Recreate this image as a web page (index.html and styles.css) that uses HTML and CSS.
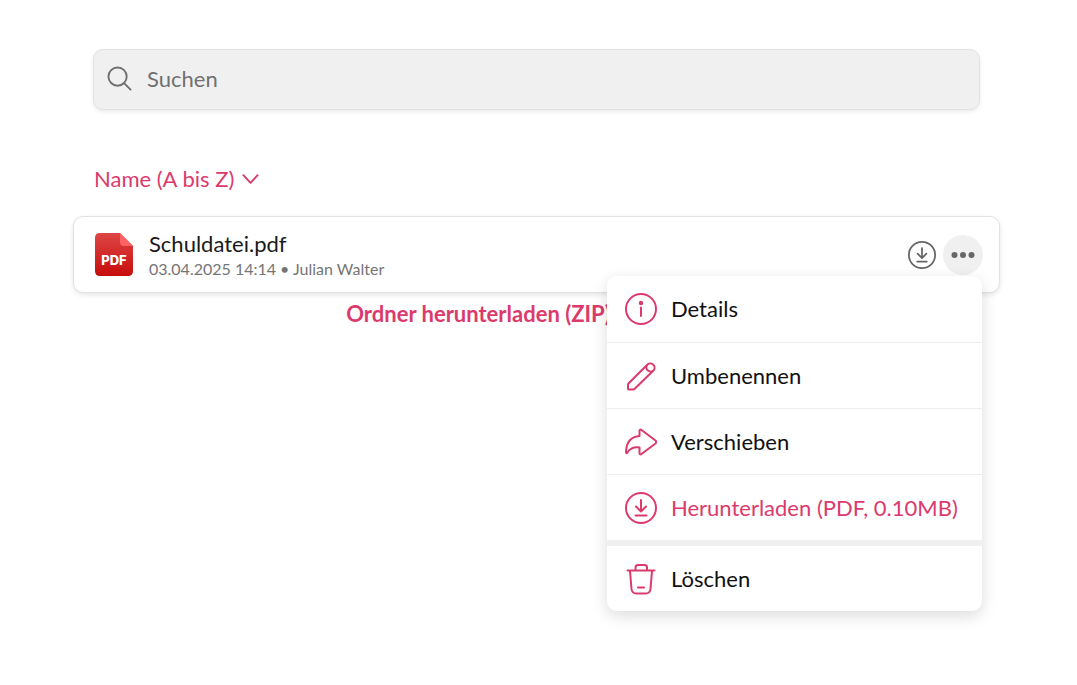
FILE: index.html
```html
<!DOCTYPE html>
<html lang="de">
<head>
<meta charset="utf-8">
<meta name="viewport" content="width=device-width, initial-scale=1">
<title>Dateien</title>
<link rel="stylesheet" href="styles.css">
</head>
<body>
<main class="page">
  <label class="search">
    <svg class="search-icon" viewBox="0 0 26 26" aria-hidden="true"><circle cx="11" cy="11" r="9.5"/><path d="M18 18l6.500 6.500"/></svg>
    <input class="search-input" type="search" placeholder="Suchen" aria-label="Suchen">
  </label>

  <button class="sort" type="button">Name (A bis Z)
    <svg class="sort-icon" viewBox="0 0 18 12" aria-hidden="true"><path d="M1.500 2l7.500 8 7.500-8"/></svg>
  </button>

  <article class="file">
    <svg class="file-icon" viewBox="0 0 38 44" role="img" aria-label="PDF-Datei">
      <defs><linearGradient id="pdf" x1="0" y1="0" x2="0" y2="1"><stop offset="0" stop-color="#de4545"/><stop offset="1" stop-color="#c70d0d"/></linearGradient></defs>
      <path fill="url(#pdf)" d="M5 0H25L38 13V38Q38 43 33 43H5Q0 43 0 38V5Q0 0 5 0Z"/>
      <path fill="#ff6262" d="M25 0L38 13H29Q25 13 25 9Z"/>
      <text class="file-type" x="19" y="32" text-anchor="middle">PDF</text>
    </svg>
    <div class="file-text">
      <h2 class="file-name">Schuldatei.pdf</h2>
      <p class="file-meta">03.04.2025 14:14 • Julian Walter</p>
    </div>
    <div class="actions">
      <button class="action" type="button" aria-label="Herunterladen">
        <svg class="action-icon" viewBox="0 0 32 32" aria-hidden="true"><circle cx="16" cy="16" r="15"/><path d="M16 8v11M11 14.500l5 5 5-5M10.500 23.500h11"/></svg>
      </button>
      <button class="action action-open" type="button" aria-label="Mehr" aria-expanded="true">
        <svg class="dots" viewBox="0 0 24 8" aria-hidden="true"><circle cx="3.500" cy="4" r="3"/><circle cx="12" cy="4" r="3"/><circle cx="20.500" cy="4" r="3"/></svg>
      </button>
      <div class="menu">
        <button class="menu-item" type="button">
          <svg class="menu-icon" viewBox="0 0 32 32" aria-hidden="true"><circle cx="16" cy="16" r="15"/><path d="M16 14.500v8.500"/><circle class="solid" cx="16" cy="10" r="1.200"/></svg>
          Details
        </button>
        <button class="menu-item" type="button">
          <svg class="menu-icon" viewBox="0 0 32 32" aria-hidden="true"><path d="M4 29.500Q3 29.500 3 28.500V25Q3 24 3.700 23.300L22.500 4.500A4.250 4.250 0 0 1 28.500 10.500L9.700 28.800Q9 29.500 8 29.500ZM22.500 4.500A4.250 4.250 0 0 0 28.500 10.500"/></svg>
          Umbenennen
        </button>
        <button class="menu-item" type="button">
          <svg class="menu-icon" viewBox="0 0 32 32" aria-hidden="true"><path d="M14.500 10V4.500Q15 3 16.500 4L30.500 14.500Q32 16 30.500 17.500L16.500 28Q15 29 14.500 27.500V21.500Q6 20.500 2.500 26.500Q1 28 1 26Q1.500 11 14.500 10Z"/></svg>
          Verschieben
        </button>
        <button class="menu-item menu-item-active" type="button">
          <svg class="menu-icon" viewBox="0 0 32 32" aria-hidden="true"><circle cx="16" cy="16" r="15"/><path d="M16 8v11M11 14.500l5 5 5-5M10.500 23.500h11"/></svg>
          Herunterladen (PDF, 0.10MB)
        </button>
        <button class="menu-item menu-item-separate" type="button">
          <svg class="menu-icon" viewBox="0 0 32 32" aria-hidden="true"><path d="M2.500 7.500h27M10.500 7V4.500Q10.500 2 13 2h6.500Q22 2 22 4.500V7M5 8l1.500 18q.5 4.500 5 4.500h9q4.500 0 5-4.500L27 8M13 24.500h6"/></svg>
          Löschen
        </button>
      </div>
    </div>
  </article>

  <a class="folder-link" href="#">Ordner herunterladen (ZIP)</a>
</main>
</body>
</html>
```
FILE: styles.css
```css
* {
  box-sizing: border-box;
}

body {
  margin: 0;
  background: #fff;
  color: #1a1a1a;
  font-family: Lato, "Noto Sans", sans-serif;
  font-size: 22px;
  line-height: 28px;
}

button {
  margin: 0;
  padding: 0;
  border: 0;
  background: none;
  color: inherit;
  font: inherit;
  cursor: pointer;
}

svg {
  flex: none;
  fill: none;
  stroke: currentColor;
  stroke-width: 2;
  stroke-linecap: round;
  stroke-linejoin: round;
}

.page {
  display: flex;
  flex-direction: column;
  min-height: 100vh;
  padding: 49px 77px 40px 73px;
}

.search {
  display: flex;
  align-items: center;
  gap: 15px;
  margin: 0 20px;
  padding: 14px 13px 16px;
  border: 1px solid #e2e2e2;
  border-radius: 10px;
  background: #f0f0f0;
  box-shadow: 0 2px 4px rgb(0 0 0 / 8%);
  color: #707070;
}

.search-icon {
  width: 25px;
  height: 27px;
}

.search-input {
  flex: 1;
  min-width: 0;
  height: 29px;
  padding: 0;
  border: 0;
  outline: 0;
  background: none;
  color: inherit;
  font: inherit;
}

.search-input::placeholder {
  color: #707070;
  opacity: 1;
}

.sort {
  display: flex;
  align-items: center;
  align-self: flex-start;
  gap: 8px;
  margin: 55px 21px 23px;
  color: #dc3a6c;
}

.sort-icon {
  width: 17px;
  height: 12px;
}

.file {
  display: flex;
  align-items: center;
  gap: 16px;
  padding: 13px 16px 12px 21px;
  border: 1px solid #e2e2e2;
  border-radius: 10px;
  background: #fff;
  box-shadow: 0 2px 5px rgb(0 0 0 / 10%);
}

.file-icon {
  width: 38px;
  height: 44px;
  stroke: none;
}

.file-type {
  fill: #fff;
  font-family: Inter, sans-serif;
  font-size: 13px;
  font-weight: 800;
}

.file-text {
  flex: 1;
  min-width: 0;
}

.file-name,
.file-meta {
  margin: 0;
  font-weight: 400;
}

.file-name {
  font-size: 22px;
  line-height: 28px;
}

.file-meta {
  color: #757575;
  font-size: 16px;
  line-height: 22px;
}

.actions {
  position: relative;
  display: flex;
  gap: 1px;
  color: #666;
}

.action {
  display: grid;
  place-items: center;
  width: 40px;
  height: 40px;
  border-radius: 50%;
}

.action-open {
  background: #f0f0f0;
}

.action-icon {
  width: 28px;
  height: 28px;
}

.dots {
  width: 24px;
  height: 8px;
  fill: currentColor;
  stroke: none;
}

.menu {
  position: absolute;
  top: 41px;
  right: 1px;
  z-index: 1;
  width: 375px;
  overflow: hidden;
  border-radius: 10px;
  background: #fff;
  box-shadow: 0 5px 16px rgb(0 0 0 / 14%);
}

.menu-item {
  display: flex;
  align-items: center;
  gap: 14px;
  width: 100%;
  height: 66px;
  padding: 0 18px;
  color: #111;
  text-align: left;
}

.menu-item + .menu-item {
  border-top: 1px solid #eee;
}

.menu .menu-item-active {
  color: #dc3a6c;
}

.menu .menu-item-separate {
  height: 71px;
  border-top: 6px solid #f0f0f0;
}

.menu-icon {
  width: 32px;
  height: 32px;
  color: #dc3a6c;
}

.solid {
  fill: currentColor;
}

.folder-link {
  align-self: center;
  margin: 7px 116px 0 0;
  color: #dc3a6c;
  font-weight: 700;
  text-decoration: none;
}
```
